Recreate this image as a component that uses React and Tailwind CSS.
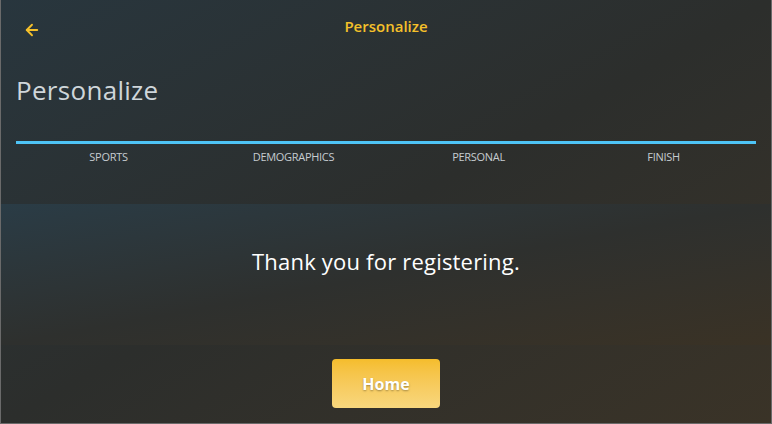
import React from 'react';
import { ArrowLeft } from 'lucide-react';

const steps = ['SPORTS', 'DEMOGRAPHICS', 'PERSONAL', 'FINISH'];

const App = () => {
    return (
        <div
            className="w-[772px] h-[424px] flex flex-col border-x border-b border-[#6a6a6a] bg-gradient-to-br from-[#28363e] via-[#2c2e2c] to-[#3a3327] overflow-hidden"
            style={{ fontFamily: '"Open Sans", Lato, sans-serif' }}
        >
            {/* top bar */}
            <div className="h-[56px] grid grid-cols-[60px_1fr_60px] items-center shrink-0">
                <div className="pl-[22px] pt-[3px] text-[#f5c02a]">
                    <ArrowLeft size={18} strokeWidth={2.5} />
                </div>
                <div className="text-center text-[15px] font-semibold text-[#f5c02a] -mt-[3px]">Personalize</div>
                <div></div>
            </div>

            {/* heading + steps */}
            <div className="px-[15px] shrink-0">
                <h1 className="h-[85px] pt-[17px] text-[26px] leading-[34px] text-[#cfd6da] font-normal tracking-[0.3px]">Personalize</h1>
                <div className="h-[3px] bg-[#4ec4f6]"></div>
                <div className="grid grid-cols-4 h-[60px] pt-[6px]">
                    {steps.map(s => (
                        <div key={s} className="text-center text-[11px] leading-[14px] text-[#c6ccd0] tracking-[-0.3px]">{s}</div>
                    ))}
                </div>
            </div>

            {/* message */}
            <div className="h-[141px] shrink-0 flex justify-center pt-[42px] bg-gradient-to-br from-[#2a3c46] via-[#2e302e] to-[#3a3225]">
                <p className="text-[22px] leading-[30px] text-white tracking-[0.2px]">Thank you for registering.</p>
            </div>

            {/* footer */}
            <div className="flex-1 flex items-center justify-center pb-[1px]">
                <button className="w-[108px] h-[49px] rounded-[4px] bg-gradient-to-b from-[#f5bd2b] to-[#f8d77d] text-white font-bold text-[16px] [text-shadow:0_1px_2px_rgba(0,0,0,0.35)]">
                    Home
                </button>
            </div>
        </div>
    );
};

export default App;
